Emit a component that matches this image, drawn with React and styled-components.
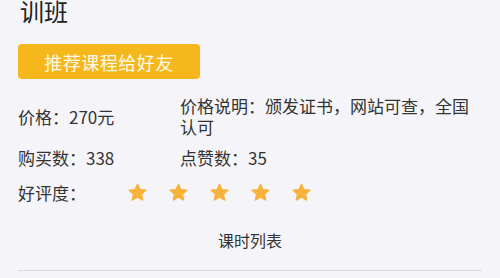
import React from "react";
import styled, { createGlobalStyle } from "styled-components";

const Global = createGlobalStyle`
  html, body { margin: 0; padding: 0; background: #f5f5f9; }
  body { font-family: "Noto Sans CJK SC", "Noto Sans", sans-serif; color: #333; overflow: hidden; }
`;

const Page = styled.div`
  width: 500px;
  height: 278px;
  box-sizing: border-box;
  padding: 0 18px;
  background: #f5f5f9;
  overflow: hidden;
`;

const Title = styled.h1`
  margin: -4px 0 0 2px;
  font-size: 24px;
  line-height: 30px;
  font-weight: 400;
  color: #222;
`;

const ShareButton = styled.button`
  display: block;
  margin-top: 18px;
  width: 182px;
  height: 35px;
  border: none;
  border-radius: 4px;
  background: #f6b71d;
  color: #fffbe9;
  font-family: inherit;
  font-size: 18px;
  letter-spacing: 0.5px;
  padding: 0;
`;

const InfoGrid = styled.div`
  display: grid;
  grid-template-columns: 162px 1fr;
  align-items: center;
  row-gap: 10px;
  margin-top: 16px;
  font-size: 17px;
  line-height: 21px;
  color: #333;
`;

const Cell = styled.div``;

const RatingRow = styled.div`
  display: flex;
  align-items: center;
  margin-top: 14px;
  font-size: 17px;
  line-height: 21px;
`;

const RatingLabel = styled.span`
  width: 109px;
`;

const Stars = styled.div`
  display: flex;
  gap: 20px;
`;

const SectionTitle = styled.div`
  margin-top: 25px;
  text-align: center;
  font-size: 16px;
  line-height: 24px;
  color: #333;
`;

const Divider = styled.div`
  margin-top: 18px;
  height: 1px;
  background: #dcdcdf;
`;

const Star = () => (
  <svg width="21" height="21" viewBox="0 0 24 24">
    <path
      d="M12 2.2l2.9 6.3 6.9.8-5.1 4.7 1.4 6.8L12 17.4l-6.1 3.4 1.4-6.8-5.1-4.7 6.9-.8z"
      fill="#f7b23b"
      stroke="#f7b23b"
      strokeWidth="1.2"
      strokeLinejoin="round"
    />
  </svg>
);

export default function App() {
  return (
    <Page>
      <Global />
      <Title>训班</Title>
      <ShareButton>推荐课程给好友</ShareButton>
      <InfoGrid>
        <Cell>价格：270元</Cell>
        <Cell>价格说明：颁发证书，网站可查，全国认可</Cell>
        <Cell>购买数：338</Cell>
        <Cell>点赞数：35</Cell>
      </InfoGrid>
      <RatingRow>
        <RatingLabel>好评度：</RatingLabel>
        <Stars>
          {[0, 1, 2, 3, 4].map((i) => (
            <Star key={i} />
          ))}
        </Stars>
      </RatingRow>
      <SectionTitle>课时列表</SectionTitle>
      <Divider />
    </Page>
  );
}
